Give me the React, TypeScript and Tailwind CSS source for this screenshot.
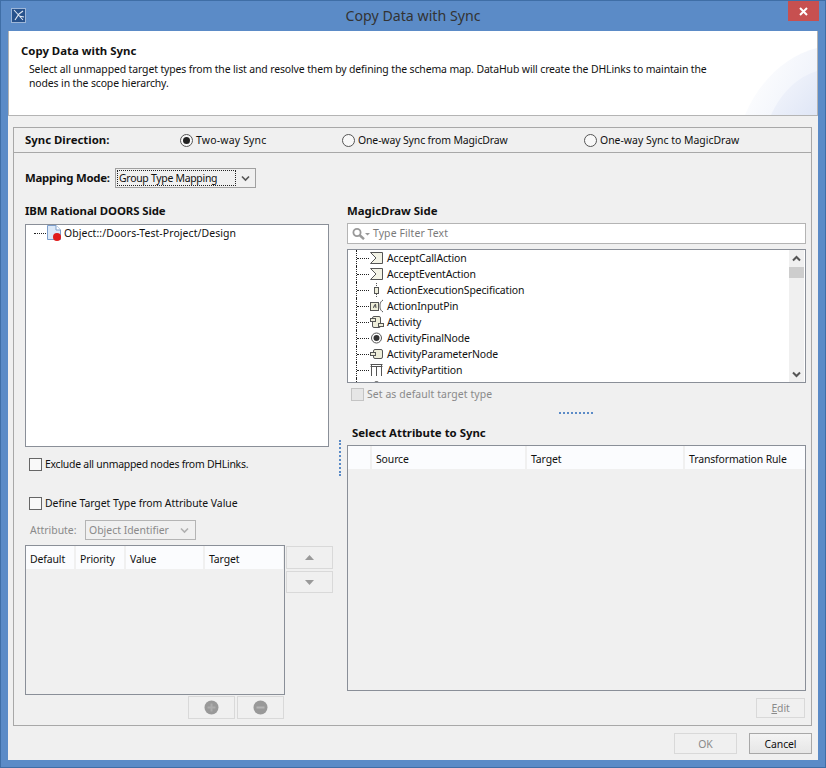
import React from "react";

const Radio = ({ checked, label, className }: { checked?: boolean; label: string; className: string }) => (
  <div className={`flex items-center gap-[3px] ${className}`}>
    <span className="flex items-center justify-center w-[13px] h-[13px] rounded-full border border-[#555] bg-[#f8f8f8]">
      {checked && <span className="w-[7px] h-[7px] rounded-full bg-[#222]" />}
    </span>
    <span>{label}</span>
  </div>
);

const Check = ({ label, disabled, className = "" }: { label: string; disabled?: boolean; className?: string }) => (
  <div className={`flex items-center gap-[3px] h-[13px] ${disabled ? "text-[#8a8a8a]" : ""}`}>
    <span className={`w-[13px] h-[13px] border ${disabled ? "border-[#c4c4c4] bg-[#e6e6e6]" : "border-[#666] bg-[#f9f9f9]"}`} />
    <span className={`mb-[2px] ${className}`}>{label}</span>
  </div>
);

const Chevron = ({ color }: { color: string }) => (
  <svg width="9" height="7" viewBox="0 0 9 7" fill="none" stroke={color} strokeWidth="1.6">
    <path d="M1 1.5 L4.5 5 L8 1.5" />
  </svg>
);

const Disabled = ({ className, children }: { className: string; children: React.ReactNode }) => (
  <div className={`flex items-center justify-center border border-[#d9d9d9] bg-[#f0f0f0] ${className}`}>{children}</div>
);

const stroke = "#555";

const icons: Record<string, React.ReactNode> = {
  accept: <path d="M0.5 1.5 H12.5 V12.5 H0.5 L6 7 Z" fill="#f3f3e6" stroke={stroke} />,
  exec: (
    <g fill="#eeeeda" stroke={stroke}>
      <rect x="4.5" y="4.5" width="4" height="6" />
      <path d="M6.5 0 V3 M6.5 11 V14" strokeDasharray="1 1" />
    </g>
  ),
  pin: (
    <g fill="none" stroke={stroke}>
      <rect x="0.5" y="3.5" width="8" height="8" fill="#eeeeda" />
      <path d="M6 7 H4 L3.5 9 M4 7 L5.5 5 L6 9" />
      <path d="M13 1 C10 3 10 5 10 7 C10 9 10 11 13 13" />
    </g>
  ),
  activity: (
    <g fill="#eeeeda" stroke={stroke}>
      <rect x="2.5" y="1.5" width="8" height="11" rx="1.5" />
      <rect x="0.5" y="3.5" width="5" height="3" />
      <rect x="8.5" y="8.5" width="5" height="3" />
    </g>
  ),
  finalNode: (
    <g>
      <circle cx="6.5" cy="7" r="5" fill="#fff" stroke={stroke} />
      <circle cx="6.5" cy="7" r="3" fill="#333" />
    </g>
  ),
  param: (
    <g fill="#eeeeda" stroke={stroke}>
      <rect x="3.5" y="2.5" width="9" height="9" rx="1.5" />
      <rect x="0.5" y="5.5" width="5" height="3" />
    </g>
  ),
  partition: <path d="M0.5 1.5 H12.5 M0.5 3.5 H12.5 M1.5 1.5 V13 M6.5 3.5 V13 M11.5 1.5 V13" fill="none" stroke={stroke} />,
};

const rows = [
  ["AcceptCallAction", "accept"],
  ["AcceptEventAction", "accept"],
  ["ActionExecutionSpecification", "exec"],
  ["ActionInputPin", "pin"],
  ["Activity", "activity"],
  ["ActivityFinalNode", "finalNode"],
  ["ActivityParameterNode", "param"],
  ["ActivityPartition", "partition"],
];

const Connector = () => (
  <div className="flex items-center h-4 ml-2 border-l border-dotted border-[#222]">
    <div className="w-3 border-t border-dotted border-[#222]" />
  </div>
);

const TreeRow = ({ label, icon }: { label: string; icon: string }) => (
  <div className="flex items-center h-4">
    <Connector />
    <svg width="14" height="14" viewBox="0 0 14 14" className="ml-px shrink-0">
      {icons[icon]}
    </svg>
    <span className="ml-[3px]">{label}</span>
  </div>
);

const Header = ({ label, className }: { label: string; className: string }) => (
  <div className={`flex items-center h-[23px] pl-1 pt-[2px] bg-[#fbfcfe] ${className}`}>{label}</div>
);

export default function App() {
  return (
    <div className="w-[826px] h-[768px] flex flex-col border border-[#3f6ea6] bg-[#5b8bc7] px-[7px] pb-[7px] font-['Noto_Sans',sans-serif] text-[10.45px] tracking-[-0.12px] leading-4 text-[#111]">
      <div className="h-[30px] shrink-0 grid grid-cols-[1fr_auto_1fr]">
        <div className="pt-[7px] pl-[3px]">
          <svg width="15" height="15" viewBox="0 0 15 15">
            <rect x="0.5" y="0.5" width="14" height="14" fill="#27528c" stroke="#9db6d8" />
            <path d="M3 2 L12 12 M4 12 L8 6 L12 3 M8 8 L13 9" fill="none" stroke="#dfe7f3" strokeWidth="1.1" />
          </svg>
        </div>
        <div className="text-[14.2px] tracking-normal leading-[30px] text-[#333]">Copy Data with Sync</div>
        <div className="flex justify-end -mr-px">
          <div className="w-[31px] h-5 bg-[#c75050] flex items-center justify-center">
            <svg width="9" height="9" viewBox="0 0 9 9" stroke="#fff" strokeWidth="2">
              <path d="M1 1 L8 8 M8 1 L1 8" />
            </svg>
          </div>
        </div>
      </div>

      <div className="flex-1 flex flex-col bg-[#f0f0f0]">
        <div className="relative h-[85px] shrink-0 bg-white border border-t-0 border-[#b4b4b4] pl-3 pt-[12px]">
          <div className="font-bold text-[11.4px] tracking-normal">Copy Data with Sync</div>
          <div className="mt-[3px] pl-2 leading-[14px] w-[690px]">
            Select all unmapped target types from the list and resolve them by defining the schema map. DataHub will create the DHLinks to maintain the nodes in the scope hierarchy.
          </div>
          <svg width="72" height="68" viewBox="0 0 72 68" className="absolute right-0 bottom-0">
            <defs>
              <linearGradient id="arcA" x1="0" y1="0.3" x2="1" y2="0.8">
                <stop offset="0" stopColor="#ffffff" />
                <stop offset="1" stopColor="#edf1fa" />
              </linearGradient>
              <linearGradient id="arcB" x1="0" y1="0.2" x2="1" y2="1">
                <stop offset="0" stopColor="#f4f6fc" />
                <stop offset="1" stopColor="#dfe6f6" />
              </linearGradient>
            </defs>
            <path d="M72 1 C42 8 14 34 0 68 H72 Z" fill="url(#arcA)" />
            <path d="M72 24 C52 30 36 46 26 68 H72 Z" fill="url(#arcB)" />
          </svg>
        </div>

        <div className="ml-[5px] mr-[6px] mt-[11px] h-[599px] shrink-0 border border-[#a8a8a8]">
          <div className="flex items-center h-[25px] pl-[11px] border-b border-[#a8a8a8]">
            <span className="font-bold text-[11.4px] tracking-normal w-[155px]">Sync Direction:</span>
            <Radio checked label="Two-way Sync" className="w-[162px] tracking-[0.2px]" />
            <Radio label="One-way Sync from MagicDraw" className="w-[242px]" />
            <Radio label="One-way Sync to MagicDraw" className="tracking-normal" />
          </div>

          <div className="flex items-center h-5 mt-[15px] ml-[11px]">
            <span className="font-bold text-[11.4px] tracking-[-0.25px] w-[90px]">Mapping Mode:</span>
            <div className="flex items-center w-[141px] h-5 border border-[#a0a0a0] pl-px">
              <div className="w-[119px] h-4 border border-dotted border-[#222] pl-px tracking-[-0.28px] leading-[14px]">Group Type Mapping</div>
              <div className="ml-[5px]">
                <Chevron color="#555" />
              </div>
            </div>
          </div>

          <div className="flex mt-[15px] ml-[11px]">
            <div className="w-[304px] shrink-0">
              <div className="font-bold text-[11.4px] tracking-[-0.1px] h-4">IBM Rational DOORS Side</div>
              <div className="mt-[5px] h-[223px] border border-[#8a8f98] bg-white">
                <div className="flex items-center h-4 pl-2">
                  <div className="w-[12px] border-t border-dotted border-[#222]" />
                  <div className="relative w-[15px] h-4 ml-px">
                    <svg width="15" height="16" viewBox="0 0 15 16">
                      <path d="M0.5 0.5 H9 L13.5 5 V14.5 H0.5 Z" fill="#dbe8f8" stroke="#7d9ecb" />
                      <path d="M9 0.5 V5 H13.5" fill="#fff" stroke="#7d9ecb" />
                    </svg>
                    <span className="absolute right-px bottom-0 w-2 h-2 rounded-full bg-[#e01b1b]" />
                  </div>
                  <span className="ml-[2px] tracking-[0.09px]">Object::/Doors-Test-Project/Design</span>
                </div>
              </div>
              <div className="mt-[11px] ml-1">
                <Check label="Exclude all unmapped nodes from DHLinks." className="tracking-[-0.25px]" />
              </div>
              <div className="mt-[26px] ml-1">
                <Check label="Define Target Type from Attribute Value" className="tracking-[-0.05px]" />
              </div>
              <div className="flex items-center h-5 mt-[10px] ml-[5px] text-[#8a8a8a] tracking-normal">
                <span className="w-[55px]">Attribute:</span>
                <div className="flex items-center w-[111px] h-5 border border-[#b4b4b4] pl-[3px]">
                  <span className="w-[91px]">Object Identifier</span>
                  <Chevron color="#b0b0b0" />
                </div>
              </div>
              <div className="flex mt-[5px]">
                <div className="w-[260px] h-[150px] shrink-0 border border-[#8a8f98]">
                  <div className="flex gap-[2px]">
                    <Header label="Default" className="w-12" />
                    <Header label="Priority" className="w-12" />
                    <Header label="Value" className="w-[77px]" />
                    <Header label="Target" className="w-[78px]" />
                  </div>
                </div>
                <div className="ml-px mt-px flex flex-col shrink-0 gap-[2px]">
                  <Disabled className="w-[47px] h-[23px]">
                    <svg width="9" height="5" viewBox="0 0 9 5" fill="#999">
                      <path d="M4.5 0 L9 5 H0 Z" />
                    </svg>
                  </Disabled>
                  <Disabled className="w-[47px] h-[22px]">
                    <svg width="9" height="5" viewBox="0 0 9 5" fill="#999">
                      <path d="M0 0 H9 L4.5 5 Z" />
                    </svg>
                  </Disabled>
                </div>
              </div>
              <div className="flex gap-[2px] mt-px ml-[163px]">
                <Disabled className="w-[47px] h-[23px]">
                  <svg width="15" height="15" viewBox="0 0 15 15">
                    <circle cx="7.5" cy="7.5" r="7" fill="#999" />
                    <path d="M7.5 3.5 V11.5 M3.5 7.5 H11.5" stroke="#adadad" strokeWidth="2" />
                  </svg>
                </Disabled>
                <Disabled className="w-[47px] h-[23px]">
                  <svg width="15" height="15" viewBox="0 0 15 15">
                    <circle cx="7.5" cy="7.5" r="7" fill="#999" />
                    <path d="M3.5 7.5 H11.5" stroke="#b5b5b5" strokeWidth="2" />
                  </svg>
                </Disabled>
              </div>
            </div>

            <div className="w-[18px] pl-[10px] pt-[237px]">
              <div className="h-[36px] border-l-2 border-dotted border-[#5b8bc7]" />
            </div>

            <div className="w-[459px]">
              <div className="font-bold text-[11.4px] tracking-normal h-4">MagicDraw Side</div>
              <div className="flex items-center mt-1 h-[21px] border border-[#b4b4b4] bg-white pl-1 text-[#7a7a7a]">
                <svg width="18" height="12" viewBox="0 0 18 12" fill="none" stroke="#999">
                  <circle cx="5" cy="4.5" r="3.6" strokeWidth="1.8" />
                  <path d="M7.5 7 L12 11.2" strokeWidth="2.4" />
                  <path d="M13 5 H18 L15.5 7.5 Z" fill="#999" stroke="none" />
                </svg>
                <span className="ml-[3px] mb-[2px] tracking-[0.1px]">Type Filter Text</span>
              </div>
              <div className="flex mt-[5px] h-[134px] border border-[#8a8f98] bg-white overflow-hidden">
                <div className="flex-1 overflow-hidden">
                  {rows.map(([label, icon]) => (
                    <TreeRow key={label} label={label} icon={icon} />
                  ))}
                  <div className="flex items-center h-4">
                    <Connector />
                    <svg width="14" height="14" viewBox="0 0 14 14" className="ml-px">
                      <circle cx="6.5" cy="5" r="2.5" fill="#eeeeda" stroke={stroke} />
                    </svg>
                  </div>
                </div>
                <div className="w-[15px] mr-px flex flex-col items-center bg-[#f0f0f0]">
                  <div className="h-[17px] flex items-center">
                    <svg width="9" height="7" viewBox="0 0 9 7" fill="none" stroke="#555" strokeWidth="2" className="rotate-180">
                      <path d="M1 1.5 L4.5 5 L8 1.5" />
                    </svg>
                  </div>
                  <div className="w-full h-[11px] bg-[#cdcdcd]" />
                  <div className="flex-1 flex items-end pb-[4px]">
                    <svg width="9" height="7" viewBox="0 0 9 7" fill="none" stroke="#555" strokeWidth="2">
                      <path d="M1 1.5 L4.5 5 L8 1.5" />
                    </svg>
                  </div>
                </div>
              </div>
              <div className="mt-[5px] ml-1">
                <Check disabled label="Set as default target type" className="tracking-[0.08px]" />
              </div>
              <div className="flex justify-center mt-[11px] pr-[2px]">
                <div className="w-[34px] border-t-2 border-dotted border-[#5b8bc7]" />
              </div>
              <div className="font-bold text-[11.4px] tracking-normal h-4 mt-[11px] pl-[5px]">Select Attribute to Sync</div>
              <div className="mt-1 h-[246px] border border-[#8a8f98]">
                <div className="flex gap-[2px]">
                  <Header label="" className="w-[22px]" />
                  <Header label="Source" className="w-[153px]" />
                  <Header label="Target" className="w-[156px]" />
                  <Header label="Transformation Rule" className="flex-1" />
                </div>
              </div>
              <div className="flex justify-end mt-[7px] pr-px">
                <Disabled className="w-[49px] h-5 text-[#8a8a8a]">
                  <span>
                    <span className="underline">E</span>dit
                  </span>
                </Disabled>
              </div>
            </div>
          </div>
        </div>

        <div className="flex justify-end gap-3 pt-[7px] mr-[6px]">
          <Disabled className="w-[63px] h-[21px] text-[#8a8a8a]">OK</Disabled>
          <div className="flex items-center justify-center w-[63px] h-[21px] border border-[#a8a8a8] bg-gradient-to-b from-[#f4f4f4] to-[#e6e6e6]">
            Cancel
          </div>
        </div>
      </div>
    </div>
  );
}
